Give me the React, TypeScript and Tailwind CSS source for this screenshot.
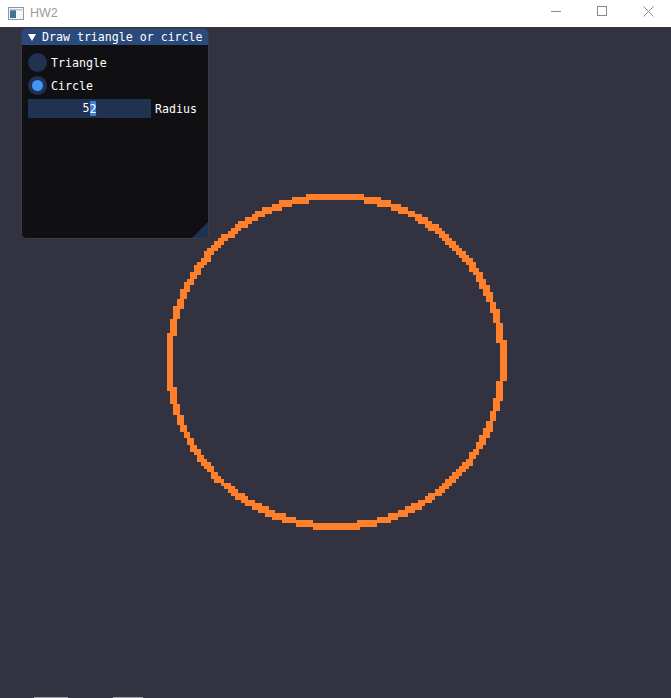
import React from 'react'

const mono = {fontFamily: '"DejaVu Sans Mono", "Liberation Mono", monospace'}

// the circle in the picture is rasterised coarsely, so build it from cells
const CELL = 3.4
const CX = 336
const CY = 334.5
const RX = 166.6
const RY = 165.2
const HALF = 3.5

function circleRuns() {
  const runs: {x: number; y: number; w: number; h: number}[] = []
  const n = Math.ceil(671 / CELL)
  for (let j = 0; j < n; j++) {
    const y0 = Math.round(j * CELL)
    const y1 = Math.round((j + 1) * CELL)
    const cy = (j + 0.5) * CELL - CY
    let start = -1
    for (let i = 0; i <= n; i++) {
      const cx = (i + 0.5) * CELL - CX
      const d = Math.sqrt(cx * cx + cy * cy)
      const th = Math.atan2(cy, cx)
      const r = (RX * RY) / Math.sqrt((RY * Math.cos(th)) ** 2 + (RX * Math.sin(th)) ** 2)
      const on = i < n && d - r >= -HALF && d - r < HALF
      if (on && start < 0) start = i
      if (!on && start >= 0) {
        const x0 = Math.round(start * CELL)
        const x1 = Math.round(i * CELL)
        runs.push({x: x0, y: y0, w: x1 - x0, h: y1 - y0})
        start = -1
      }
    }
  }
  return runs
}

const runs = circleRuns()

const AppIcon = () => (
  <svg width="16" height="13" viewBox="0 0 16 13" className="shrink-0">
    <rect x="0.5" y="0.5" width="15" height="12" fill="#f4f6f8" stroke="#8c98a4" />
    <rect x="2" y="2" width="6" height="9" fill="#3f7390" />
    <rect x="2" y="2" width="12" height="1.5" fill="#b9c6d2" />
  </svg>
)

const TitleBar = () => (
  <div className="h-[27px] bg-white flex items-center shrink-0">
    <div className="pl-[8px] pr-[6px] flex items-center">
      <AppIcon />
    </div>
    <span className="text-[12.5px] text-[#9b9b9b] leading-none" style={{fontFamily: '"Liberation Sans", Arial, sans-serif'}}>
      HW2
    </span>
    <div className="flex-1" />
    <div className="flex items-center h-full">
      <div className="w-[46px] h-full flex items-center justify-center">
        <div className="w-[10px] h-px bg-[#8a8a8a] mb-[5px]" />
      </div>
      <div className="w-[46px] h-full flex items-center justify-center">
        <div className="w-[10px] h-[10px] border border-[#8a8a8a] mb-[5px]" />
      </div>
      <div className="w-[46px] h-full flex items-center justify-center">
        <svg width="11" height="11" viewBox="0 0 11 11" className="mb-[5px]">
          <path d="M0.5 0.5 L10.5 10.5 M10.5 0.5 L0.5 10.5" stroke="#8a8a8a" strokeWidth="1" />
        </svg>
      </div>
    </div>
  </div>
)

const Radio = ({label, checked}: {label: string; checked?: boolean}) => (
  <div className="h-[19px] flex items-center gap-[4px]">
    <div className="w-[19px] h-[19px] rounded-full bg-[#1f3250] flex items-center justify-center">
      {checked && <div className="w-[11px] h-[11px] rounded-full bg-[#4296fa]" />}
    </div>
    <span className="text-[11.6px] text-white leading-none mt-[2px]">{label}</span>
  </div>
)

const ImguiPanel = () => (
  <div
    className="absolute left-[21px] top-[1px] w-[188px] h-[211px] rounded-[5px] border border-[#3d3d48] bg-[#101012] overflow-hidden flex flex-col"
    style={mono}
  >
    <div className="h-[16px] bg-[#294a7a] flex items-center shrink-0">
      <svg width="8" height="7" viewBox="0 0 8 7" className="ml-[6px] mr-[6px] mt-[1px]">
        <path d="M0 0 L8 0 L4 7 Z" fill="#ffffff" />
      </svg>
      <span className="text-[11.6px] text-white leading-none mt-[1px]">Draw triangle or circle</span>
    </div>
    <div className="flex flex-col gap-[4px] pt-[8px] pl-[6px]">
      <Radio label="Triangle" />
      <Radio label="Circle" checked />
      <div className="flex items-center gap-[4px]">
        <div className="w-[123px] h-[19px] bg-[#1f3250] flex items-center justify-center">
          <span className="text-[11.6px] text-white leading-none mt-[1px]">5</span>
          <span className="text-[11.6px] text-white leading-[14px] pt-[1px] bg-[#3b7fd8]">2</span>
        </div>
        <span className="text-[11.6px] text-white leading-none mt-[2px]">Radius</span>
      </div>
    </div>
    <div className="flex-1" />
    <div className="flex justify-end">
      <svg width="16" height="16" viewBox="0 0 16 16">
        <path d="M16 0 L16 16 L0 16 Z" fill="#1e3352" />
      </svg>
    </div>
  </div>
)

export default function App() {
  return (
    <div className="w-[671px] h-[698px] flex flex-col bg-[#323240] overflow-hidden">
      <TitleBar />
      <div className="relative flex-1">
        <svg className="absolute inset-0" width="671" height="671" viewBox="0 0 671 671" shapeRendering="crispEdges">
          {runs.map((r, k) => (
            <rect key={k} x={r.x} y={r.y} width={r.w} height={r.h} fill="#ff7f2a" />
          ))}
        </svg>
        <ImguiPanel />
        <div className="absolute bottom-0 left-[34px] w-[34px] h-px bg-[#a3a3ab]" />
        <div className="absolute bottom-0 left-[113px] w-[30px] h-px bg-[#a3a3ab]" />
      </div>
    </div>
  )
}
